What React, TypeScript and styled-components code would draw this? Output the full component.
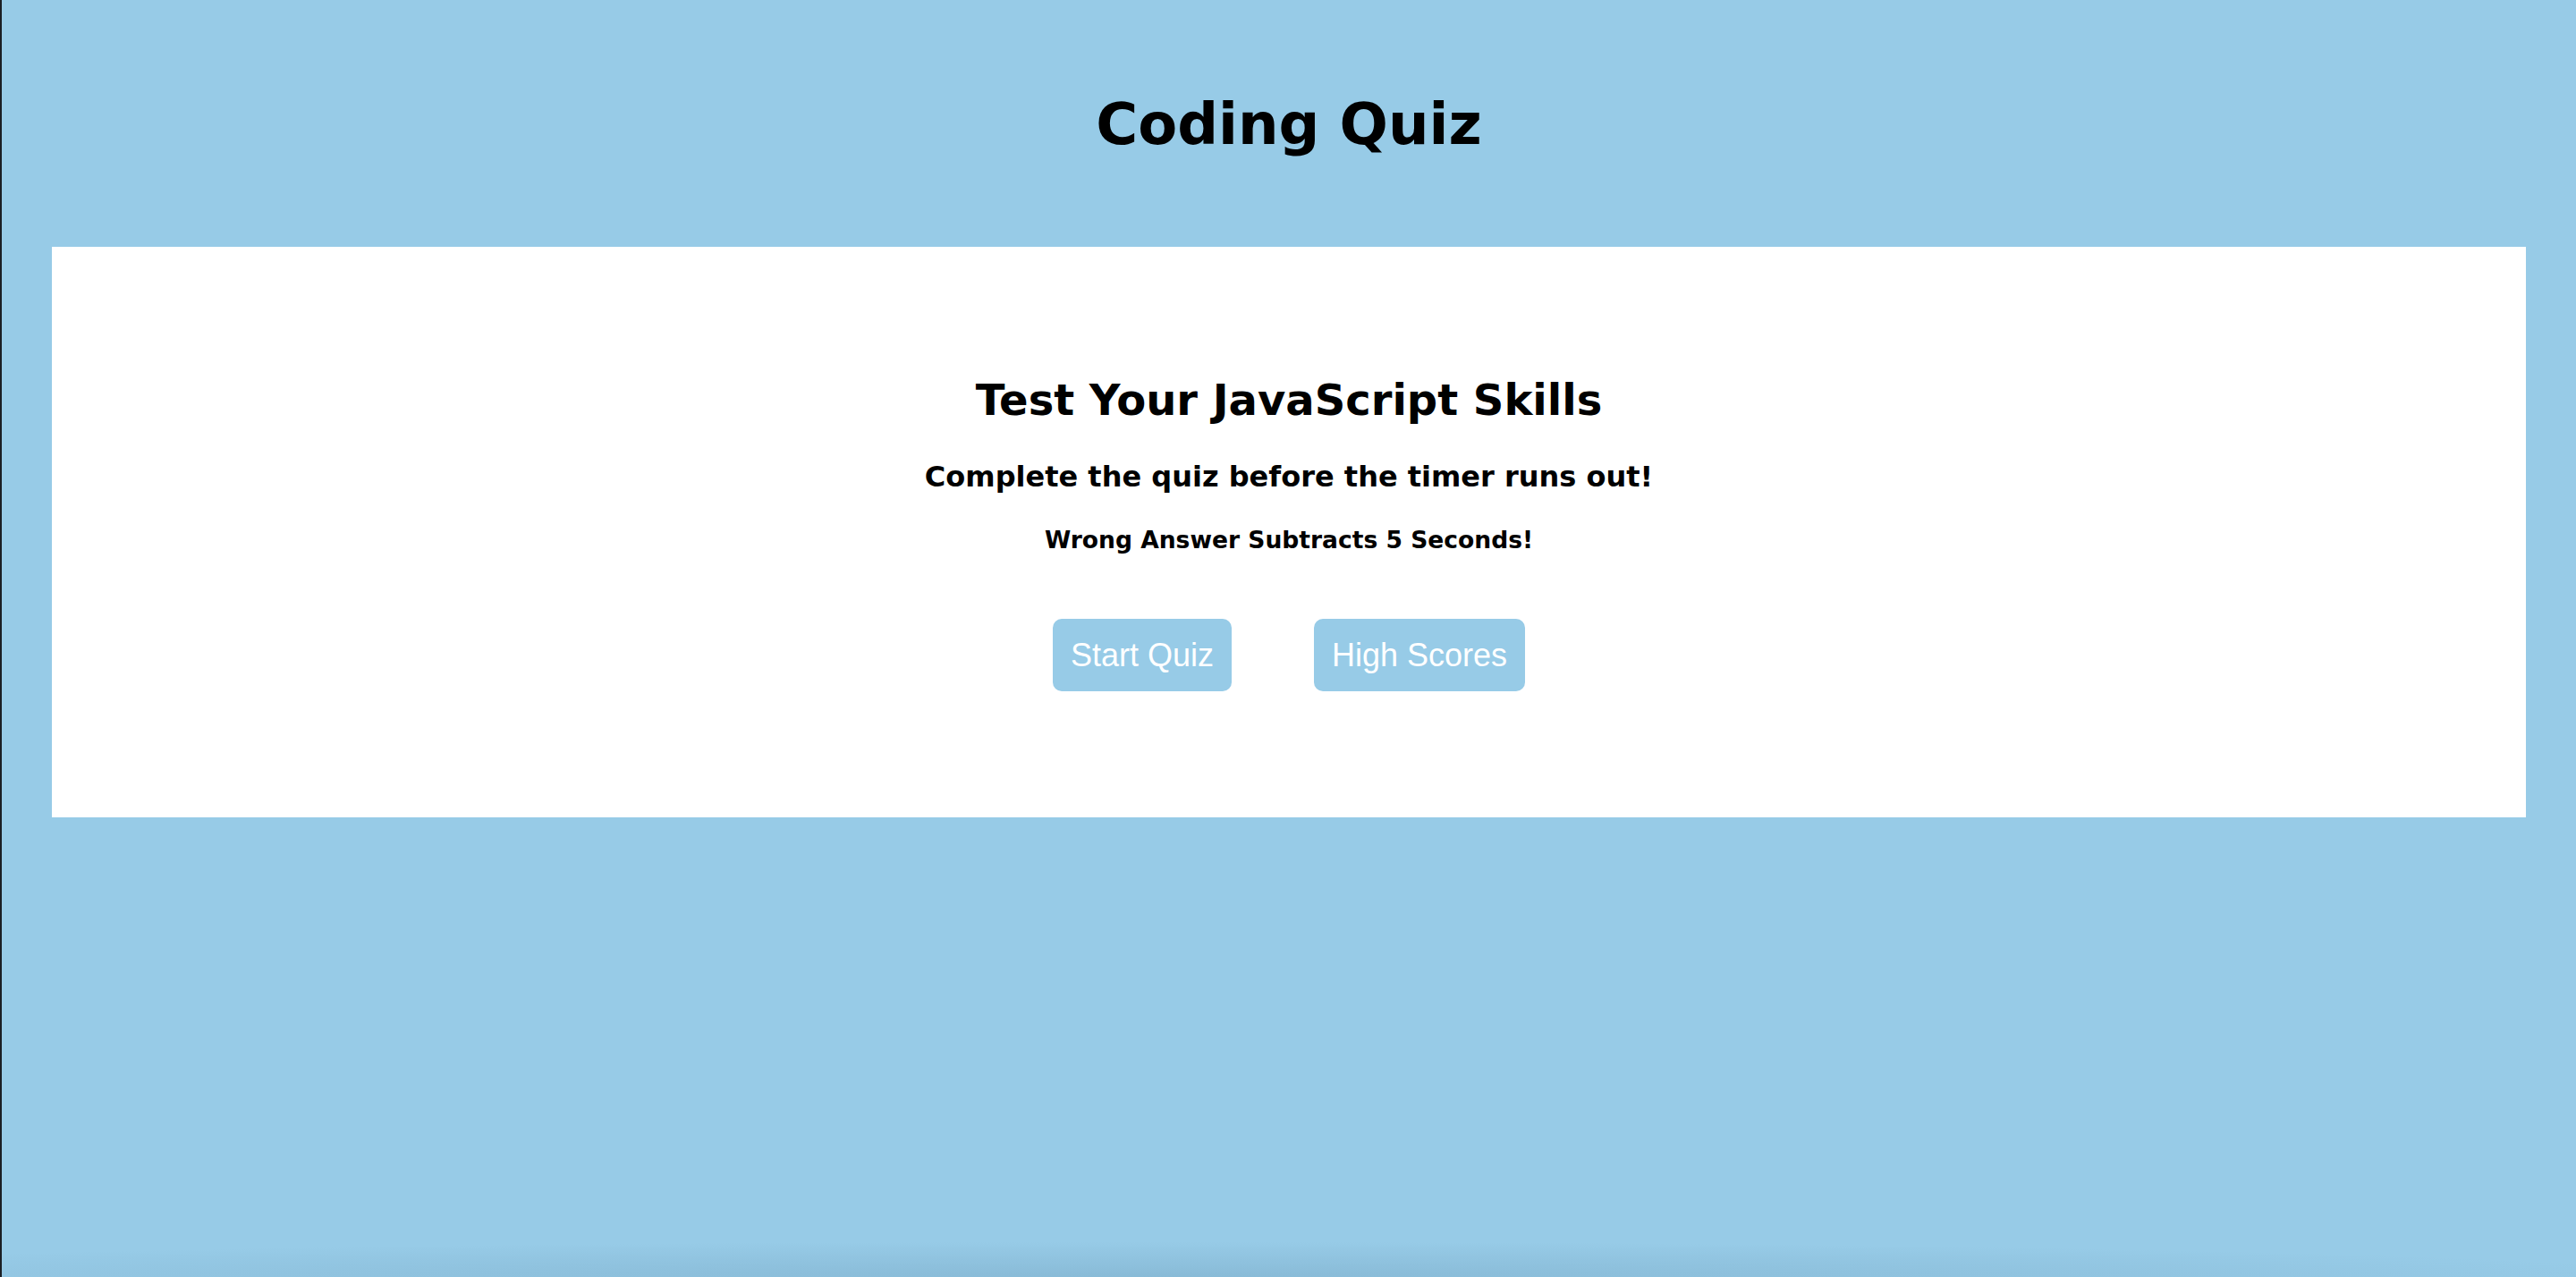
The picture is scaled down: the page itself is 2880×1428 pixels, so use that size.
import React from "react";
import styled, { createGlobalStyle } from "styled-components";

const GlobalStyle = createGlobalStyle`
  html, body {
    margin: 0;
    padding: 0;
    background: #97cbe7;
  }
  body {
    font-family: "DejaVu Sans", Verdana, sans-serif;
    color: #000;
  }
  * { box-sizing: border-box; }
`;

const Page = styled.div`
  min-height: 1428px;
  border-left: 2px solid #1b1f24;
  background:
    radial-gradient(ellipse 60% 40px at 45% 100%, rgba(60, 100, 130, 0.16), rgba(60, 100, 130, 0) 100%),
    #97cbe7;
  display: flex;
  flex-direction: column;
  align-items: stretch;
  padding: 102px 56px 0 56px;
`;

const Title = styled.h1`
  margin: 0;
  font-size: 64px;
  line-height: 74px;
  font-weight: 700;
  text-align: center;
`;

const Card = styled.main`
  margin-top: 100px;
  background: #ffffff;
  padding: 143px 24px 141px 24px;
  display: flex;
  flex-direction: column;
  align-items: center;
`;

const Heading = styled.h2<{ $size: number; $line: number; $gap: number }>`
  margin: ${(p) => p.$gap}px 0 0 0;
  font-size: ${(p) => p.$size}px;
  line-height: ${(p) => p.$line}px;
  font-weight: 700;
  text-align: center;
`;

const ButtonRow = styled.div`
  margin-top: 73px;
  display: flex;
  justify-content: center;
  gap: 92px;
`;

const Button = styled.button`
  border: none;
  border-radius: 10px;
  background: #97cbe7;
  color: #ffffff;
  font-family: "Liberation Sans", Arial, sans-serif;
  font-size: 36px;
  line-height: 41px;
  padding: 20px 20px;
  cursor: pointer;
`;

export default function App() {
  return (
    <>
      <GlobalStyle />
      <Page>
        <Title>Coding Quiz</Title>
        <Card>
          <Heading as="h2" $size={48} $line={56} $gap={0}>
            Test Your JavaScript Skills
          </Heading>
          <Heading as="h4" $size={32} $line={37} $gap={40}>
            Complete the quiz before the timer runs out!
          </Heading>
          <Heading as="h5" $size={26.56} $line={31} $gap={36}>
            Wrong Answer Subtracts 5 Seconds!
          </Heading>
          <ButtonRow>
            <Button>Start Quiz</Button>
            <Button>High Scores</Button>
          </ButtonRow>
        </Card>
      </Page>
    </>
  );
}
